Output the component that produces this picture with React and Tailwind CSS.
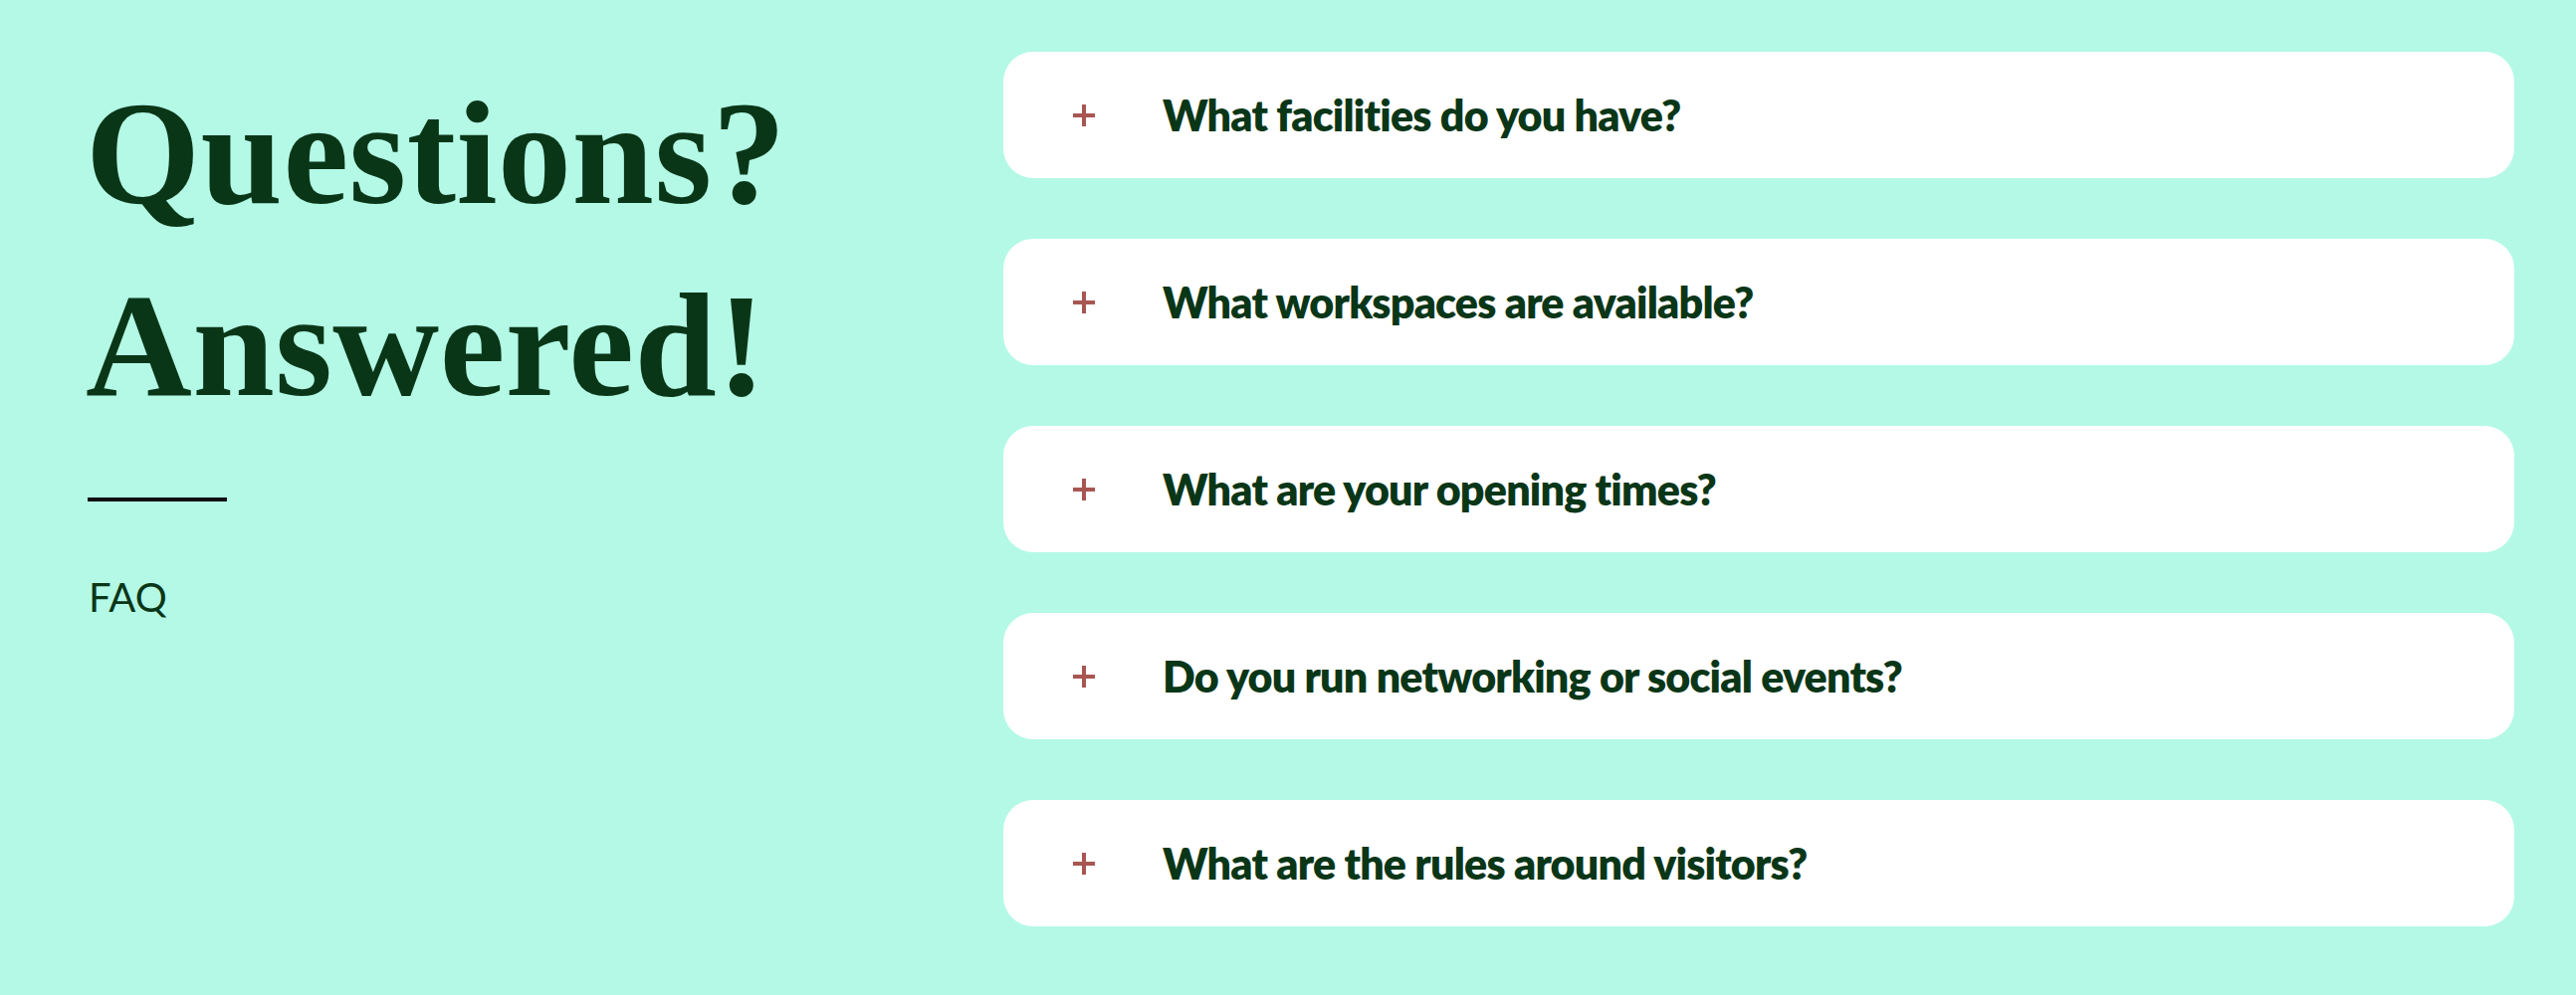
import React from "react";

const questions = [
  "What facilities do you have?",
  "What workspaces are available?",
  "What are your opening times?",
  "Do you run networking or social events?",
  "What are the rules around visitors?",
];

function PlusIcon() {
  return (
    <svg width="22" height="22" viewBox="0 0 22 22" className="shrink-0">
      <path d="M11 0v22M0 11h22" stroke="#a85652" strokeWidth="4" />
    </svg>
  );
}

export default function App() {
  return (
    <div className="min-h-[1000px] w-full bg-[#b3f9e6] flex pt-[52px] pl-[86px] pr-[62px] font-['Lato',sans-serif] text-[#0a3618]">
      {/* Left: title block */}
      <div className="w-[922px] shrink-0">
        <h1 className="mt-[6px] font-['Liberation_Serif',serif] font-bold text-[148px] leading-[193px] tracking-[0.5px]">
          Questions?
          <br />
          Answered!
        </h1>
        <div className="mt-[56px] ml-[2px] w-[140px] h-[4px] bg-[#111]" />
        <p className="mt-[72px] ml-[3px] text-[40px] leading-[48px]">FAQ</p>
      </div>

      {/* Right: accordion list */}
      <div className="flex-1 flex flex-col gap-[61px]">
        {questions.map((q) => (
          <button
            key={q}
            className="h-[127px] w-full bg-white rounded-[30px] flex items-center pl-[70px] text-left"
          >
            <PlusIcon />
            <span className="ml-[68px] text-[43px] leading-[52px] font-extrabold tracking-[-0.8px]">{q}</span>
          </button>
        ))}
      </div>
    </div>
  );
}
